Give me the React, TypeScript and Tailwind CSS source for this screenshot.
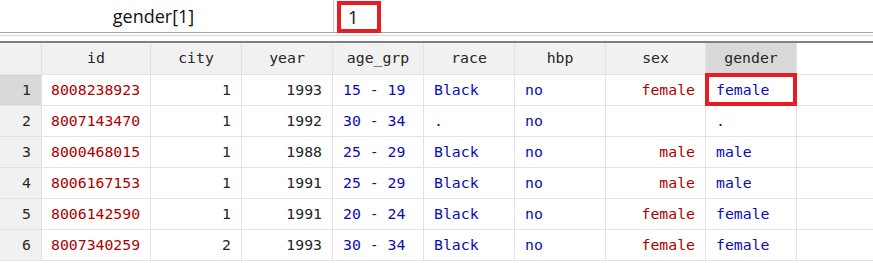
import React from "react";

type Row = {
  n: number;
  id: string;
  city: string;
  year: string;
  age: string;
  race: string;
  hbp: string;
  sex: string;
  gender: string;
};

const rows: Row[] = [
  { n: 1, id: "8008238923", city: "1", year: "1993", age: "15 - 19", race: "Black", hbp: "no", sex: "female", gender: "female" },
  { n: 2, id: "8007143470", city: "1", year: "1992", age: "30 - 34", race: ".", hbp: "no", sex: "", gender: "." },
  { n: 3, id: "8000468015", city: "1", year: "1988", age: "25 - 29", race: "Black", hbp: "no", sex: "male", gender: "male" },
  { n: 4, id: "8006167153", city: "1", year: "1991", age: "25 - 29", race: "Black", hbp: "no", sex: "male", gender: "male" },
  { n: 5, id: "8006142590", city: "1", year: "1991", age: "20 - 24", race: "Black", hbp: "no", sex: "female", gender: "female" },
  { n: 6, id: "8007340259", city: "2", year: "1993", age: "30 - 34", race: "Black", hbp: "no", sex: "female", gender: "female" },
];

const headers = ["id", "city", "year", "age_grp", "race", "hbp", "sex", "gender"];

const cols = "grid grid-cols-[42px_109px_91px_91px_91px_91px_91px_100px_91px_1fr]";
const cell = "h-[31px] border-r border-b border-[#e3e3e3] flex items-center whitespace-nowrap";
const red = "text-[#b00000]";
const blue = "text-[#0c0cb4]";
const dark = "text-[#262626]";

export default function App() {
  return (
    <div className="w-[873px] h-[263px] overflow-hidden bg-white">
      {/* current value bar */}
      <div className="flex h-[32px] font-['Open_Sans',sans-serif] text-[18px] text-[#111]">
        <div className="w-[334px] border-r border-[#c8c8c8] flex items-center justify-center pr-[26px]">
          gender[1]
        </div>
        <div className="relative z-10 ml-[3px] mt-px h-[32px] w-[44px] border-4 border-[#e81c24] flex items-center pl-[7px]">
          1
        </div>
      </div>
      <div className="h-px bg-[#a8a8a8]" />
      <div className="h-[2px]" />
      <div className="h-px bg-[#d8d8d8]" />
      <div className="h-[5px]" />
      <div className="h-[2px] bg-[#808080]" />

      {/* data grid */}
      <div className="font-['DejaVu_Sans_Mono',monospace] text-[14.8px]">
        <div className={cols}>
          <div className={`${cell} h-[32px] bg-[#f1f1f1]`} />
          {headers.map((h) => (
            <div
              key={h}
              className={`${cell} h-[32px] justify-center ${dark} ${h === "gender" ? "bg-[#d9d9d9]" : "bg-[#f1f1f1]"}`}
            >
              {h}
            </div>
          ))}
          <div className="h-[32px] border-b border-[#e3e3e3]" />
        </div>

        {rows.map((r) => (
          <div key={r.n} className={cols}>
            <div className={`${cell} justify-end pr-[10px] ${dark} ${r.n === 1 ? "bg-[#d9d9d9]" : "bg-[#f1f1f1]"}`}>
              {r.n}
            </div>
            <div className={`${cell} pl-[9px] ${red}`}>{r.id}</div>
            <div className={`${cell} justify-end pr-[10px] ${dark}`}>{r.city}</div>
            <div className={`${cell} justify-end pr-[10px] ${dark}`}>{r.year}</div>
            <div className={`${cell} pl-[10px] ${blue}`}>{r.age}</div>
            <div className={`${cell} pl-[10px] ${blue}`}>{r.race}</div>
            <div className={`${cell} pl-[10px] ${blue}`}>{r.hbp}</div>
            <div className={`${cell} justify-end pr-[10px] ${red}`}>{r.sex}</div>
            <div className={`${cell} relative pl-[10px] ${blue}`}>
              {r.gender}
              {r.n === 1 && (
                <div className="absolute -left-px -top-[2px] w-[92px] h-[33px] border-4 border-[#e81c24]" />
              )}
            </div>
            <div className="h-[31px] border-b border-[#e3e3e3]" />
          </div>
        ))}
      </div>
    </div>
  );
}
